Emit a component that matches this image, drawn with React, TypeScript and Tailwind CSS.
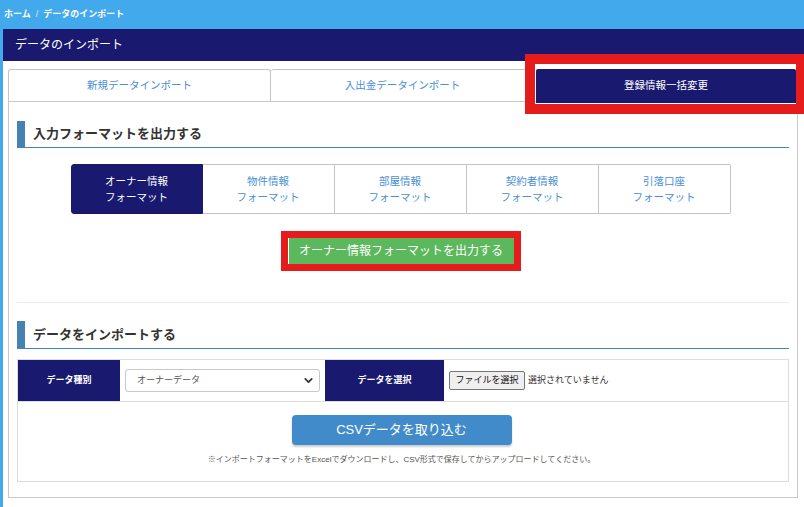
import { ChevronDown } from 'lucide-react';

const tabs = ['新規データインポート', '入出金データインポート'];
const formats = ['オーナー情報', '物件情報', '部屋情報', '契約者情報', '引落口座'];

const SectionTitle = ({ label, line }: { label: string; line: string }) => (
  <div
    className={`flex items-center h-[27px] border-l-[8px] border-l-[#4682b4] border-b pl-2 text-[13px] font-bold text-[#333] ${line}`}
  >
    {label}
  </div>
);

export default function App() {
  return (
    <div className="w-[804px] h-[507px] overflow-hidden bg-[#42a9ec] flex flex-col font-['Liberation_Sans','Noto_Sans_CJK_JP',sans-serif]">
      <div className="h-[29px] flex items-center px-1 text-[9px] font-bold text-white gap-[5px]">
        <span>ホーム</span>
        <span className="font-normal opacity-80">/</span>
        <span>データのインポート</span>
      </div>
      <div className="flex-1 ml-[3px] bg-white flex flex-col">
        <div className="h-[32px] bg-[#191970] flex items-center px-3 text-[12px] text-white">データのインポート</div>
        <div className="pl-[5px] pr-[6px] pt-[8px]">
          <div className="flex h-[32px] items-start">
            {tabs.map((t, i) => (
              <div
                key={t}
                className={`${i === 0 ? 'w-[263px]' : 'w-[264px] border-l-0'} h-[32px] border border-b-0 border-[#c4c4c4] rounded-t-[3px] flex items-center justify-center text-[10.5px] text-[#4a8fd6]`}
              >
                {t}
              </div>
            ))}
            <div className="relative z-10 ml-px w-[260px] h-[34px] bg-[#191970] rounded-t-[2px] flex items-center justify-center text-[10.5px] text-white">
              登録情報一括変更
              <div className="absolute -left-[11px] -top-[15px] -right-[10px] -bottom-[11px] border-[10px] border-[#e61c1c]" />
            </div>
          </div>
          <div className="border border-[#c8c8c8] px-2 pt-[19px] pb-[15px]">
            <SectionTitle label="入力フォーマットを出力する" line="border-b-[#4a80b2]" />
            <div className="mt-[16px] flex justify-center pr-[5px]">
              {formats.map((f, i) => (
                <div
                  key={f}
                  className={`w-[132px] h-[50px] flex flex-col items-center justify-center text-[10.5px] leading-[16px] border ${
                    i === 0
                      ? 'bg-[#191970] border-[#191970] text-white rounded-l-[3px]'
                      : 'border-[#c4c4c4] border-l-0 text-[#4a8fd6]'
                  } ${i === formats.length - 1 ? 'rounded-r-[2px]' : ''}`}
                >
                  <span>{f}</span>
                  <span>フォーマット</span>
                </div>
              ))}
            </div>
            <div className="mt-[24px] flex justify-center pr-[4px]">
              <div className="relative w-[225px] h-[26px] bg-[#5cb85c] flex items-center justify-center text-[12px] text-white">
                オーナー情報フォーマットを出力する
                <div className="absolute -left-[8px] -top-[7px] -right-[7px] -bottom-[7px] border-[7px] border-[#e61c1c]" />
              </div>
            </div>
            <div className="mt-[38px] h-px bg-[#ececec]" />
            <div className="mt-[18px]">
              <SectionTitle label="データをインポートする" line="h-[28px] border-b-[#3c87c8]" />
            </div>
            <div className="mt-[10px] border border-[#dcdcdc]">
              <div className="flex h-[42px] border-b border-[#dcdcdc]">
                <div className="w-[102px] bg-[#191970] flex items-center justify-center text-[9px] font-bold text-white">データ種別</div>
                <div className="w-[205px] flex items-center px-[5px]">
                  <div className="w-[196px] h-[23px] border border-[#c8c8c8] rounded-[3px] flex items-center justify-between pl-[11px] pr-[4px] text-[9px] text-[#555]">
                    <span>オーナーデータ</span>
                    <ChevronDown size={13} strokeWidth={3.2} className="text-[#333]" />
                  </div>
                </div>
                <div className="w-[119px] bg-[#191970] flex items-center justify-center text-[9px] font-bold text-white">データを選択</div>
                <div className="flex-1 flex items-center pl-[5px] gap-[3px] text-[9px] text-[#333]">
                  <span className="w-[76px] h-[19px] bg-[#efefef] border border-[#767676] rounded-[2px] flex items-center justify-center text-[#111]">
                    ファイルを選択
                  </span>
                  <span>選択されていません</span>
                </div>
              </div>
              <div className="h-[79px] flex flex-col items-center pt-[13px] pr-[3px]">
                <div className="w-[220px] h-[30px] bg-[#428bca] rounded-[4px] shadow-[0_2px_2px_rgba(0,0,0,0.2)] flex items-center justify-center text-[13px] text-white">
                  CSVデータを取り込む
                </div>
                <div className="mt-[9px] text-[8px] leading-[12px] text-[#555]">
                  ※インポートフォーマットをExcelでダウンロードし、CSV形式で保存してからアップロードしてください。
                </div>
              </div>
            </div>
          </div>
        </div>
      </div>
    </div>
  );
}
